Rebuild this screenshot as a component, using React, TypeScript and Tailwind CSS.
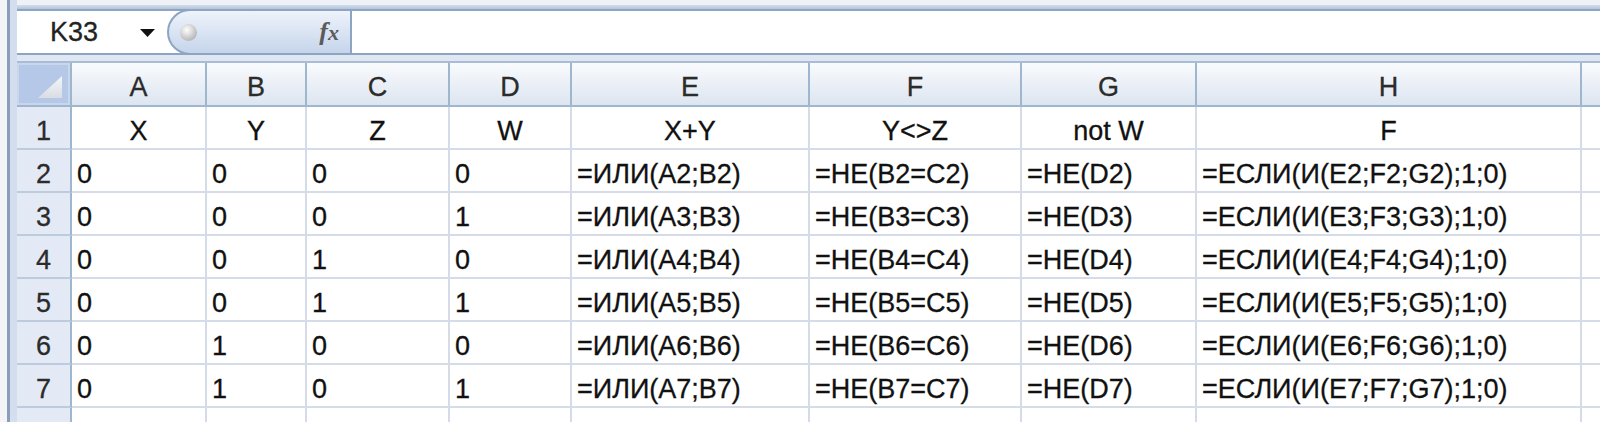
import React from 'react';

const columns = [
  { name: 'A', width: 'w-[135px]' },
  { name: 'B', width: 'w-[100px]' },
  { name: 'C', width: 'w-[143px]' },
  { name: 'D', width: 'w-[122px]' },
  { name: 'E', width: 'w-[238px]' },
  { name: 'F', width: 'w-[212px]' },
  { name: 'G', width: 'w-[175px]' },
  { name: 'H', width: 'w-[385px]' },
  { name: '', width: 'w-[120px]' },
];

const titles = ['X', 'Y', 'Z', 'W', 'X+Y', 'Y<>Z', 'not W', 'F', ''];

const bits = [
  [0, 0, 0, 0],
  [0, 0, 0, 1],
  [0, 0, 1, 0],
  [0, 0, 1, 1],
  [0, 1, 0, 0],
  [0, 1, 0, 1],
];

function rowValues(n: number, b: number[]) {
  return [
    String(b[0]),
    String(b[1]),
    String(b[2]),
    String(b[3]),
    `=ИЛИ(A${n};B${n})`,
    `=НЕ(B${n}=C${n})`,
    `=НЕ(D${n})`,
    `=ЕСЛИ(И(E${n};F${n};G${n});1;0)`,
    '',
  ];
}

function RowHeader({ label }: { label: string }) {
  return (
    <div className="flex h-full w-[55px] shrink-0 items-center justify-center border-r-2 border-b-2 border-r-[#9eb6ce] border-b-[#bccbdd] bg-[#e3eaf5] pt-[7px] text-[#2b2b2b] [-webkit-text-stroke:0.3px_#2b2b2b]">
      {label}
    </div>
  );
}

function Cell({ width, text, center }: { width: string; text: string; center?: boolean }) {
  return (
    <div
      className={`flex h-full shrink-0 items-center overflow-hidden whitespace-nowrap border-r-2 border-b-2 border-[#d6dce7] pt-[7px] text-[#111] [-webkit-text-stroke:0.3px_#111] ${width} ${
        center ? 'justify-center' : 'pl-[5px]'
      }`}
    >
      {text}
    </div>
  );
}

export default function App() {
  return (
    <div className="flex h-[422px] w-[1600px] overflow-hidden bg-white font-['Liberation_Sans',Arial,sans-serif] text-[27px] leading-none">
      {/* window edge */}
      <div className="w-[7px] shrink-0 bg-[#f2f4f7]" />
      <div className="w-[3px] shrink-0 bg-[#8b9dba]" />
      <div className="w-[7px] shrink-0 bg-[#d3dfee]" />

      <div className="flex min-w-0 flex-1 flex-col">
        <div className="h-[5px] shrink-0 bg-[#eef1f6]" />
        <div className="h-[4px] shrink-0 bg-gradient-to-b from-[#d3deec] to-[#b3c4dc]" />

        {/* formula bar */}
        <div className="flex h-[46px] shrink-0 border-y-2 border-[#8ea4c3] bg-white">
          <div className="flex w-[150px] shrink-0 items-center justify-between pl-[33px] pr-[12px] pt-[1px] text-[#222] [-webkit-text-stroke:0.3px_#222]">
            <span>K33</span>
            <svg width="15" height="8" viewBox="0 0 15 8">
              <polygon points="0,0 15,0 7.5,8" fill="#111" />
            </svg>
          </div>
          <div className="-my-[2px] flex h-[46px] w-[185px] shrink-0 items-center justify-between rounded-l-[23px] border-2 border-[#8ea4c3] bg-gradient-to-b from-[#eef3fb] to-[#c6d5eb] pl-[11px] pr-[11px]">
            <div className="h-[17px] w-[17px] rounded-full bg-[radial-gradient(circle_at_40%_35%,#ffffff,#9c9c9c)]" />
            <span className="font-['Liberation_Serif',serif] text-[26px] font-bold italic text-[#5b5b5b]">
              f<span className="text-[22px]">x</span>
            </span>
          </div>
          <div className="flex-1 bg-white" />
        </div>

        <div className="h-[6px] shrink-0 bg-[#dfe7f2]" />

        {/* column headers */}
        <div className="flex h-[46px] shrink-0 border-t-2 border-b-2 border-t-[#a9bcd6] border-b-[#9eb6ce]">
          <div className="flex w-[55px] shrink-0 items-end justify-end border-r-2 border-[#9eb6ce] bg-[#b5c8e8] pb-[7px] pr-[8px] shadow-[inset_0_0_0_2px_#c9d7ec]">
            <svg width="24" height="22" viewBox="0 0 24 22">
              <defs>
                <linearGradient id="tri" x1="0" y1="0" x2="0" y2="1">
                  <stop offset="0" stopColor="#f4f6f9" />
                  <stop offset="1" stopColor="#d9dde3" />
                </linearGradient>
              </defs>
              <polygon points="24,0 24,22 0,22" fill="url(#tri)" />
            </svg>
          </div>
          {columns.map((c, i) => (
            <div
              key={i}
              className={`flex shrink-0 items-center justify-center border-r-2 border-[#9eb6ce] bg-gradient-to-b from-[#f9fbfd] to-[#dde5f0] pt-[7px] text-[#2b2b2b] [-webkit-text-stroke:0.3px_#2b2b2b] ${c.width}`}
            >
              {c.name}
            </div>
          ))}
        </div>

        {/* row 1 */}
        <div className="flex h-[43px] shrink-0">
          <RowHeader label="1" />
          {columns.map((c, i) => (
            <Cell key={i} width={c.width} text={titles[i]} center />
          ))}
        </div>

        {bits.map((b, r) => {
          const n = r + 2;
          const values = rowValues(n, b);
          return (
            <div key={n} className="flex h-[43px] shrink-0">
              <RowHeader label={String(n)} />
              {columns.map((c, i) => (
                <Cell key={i} width={c.width} text={values[i]} />
              ))}
            </div>
          );
        })}

        {/* partial row 8 */}
        <div className="flex h-[43px] shrink-0">
          <RowHeader label="" />
          {columns.map((c, i) => (
            <Cell key={i} width={c.width} text="" />
          ))}
        </div>
      </div>
    </div>
  );
}
